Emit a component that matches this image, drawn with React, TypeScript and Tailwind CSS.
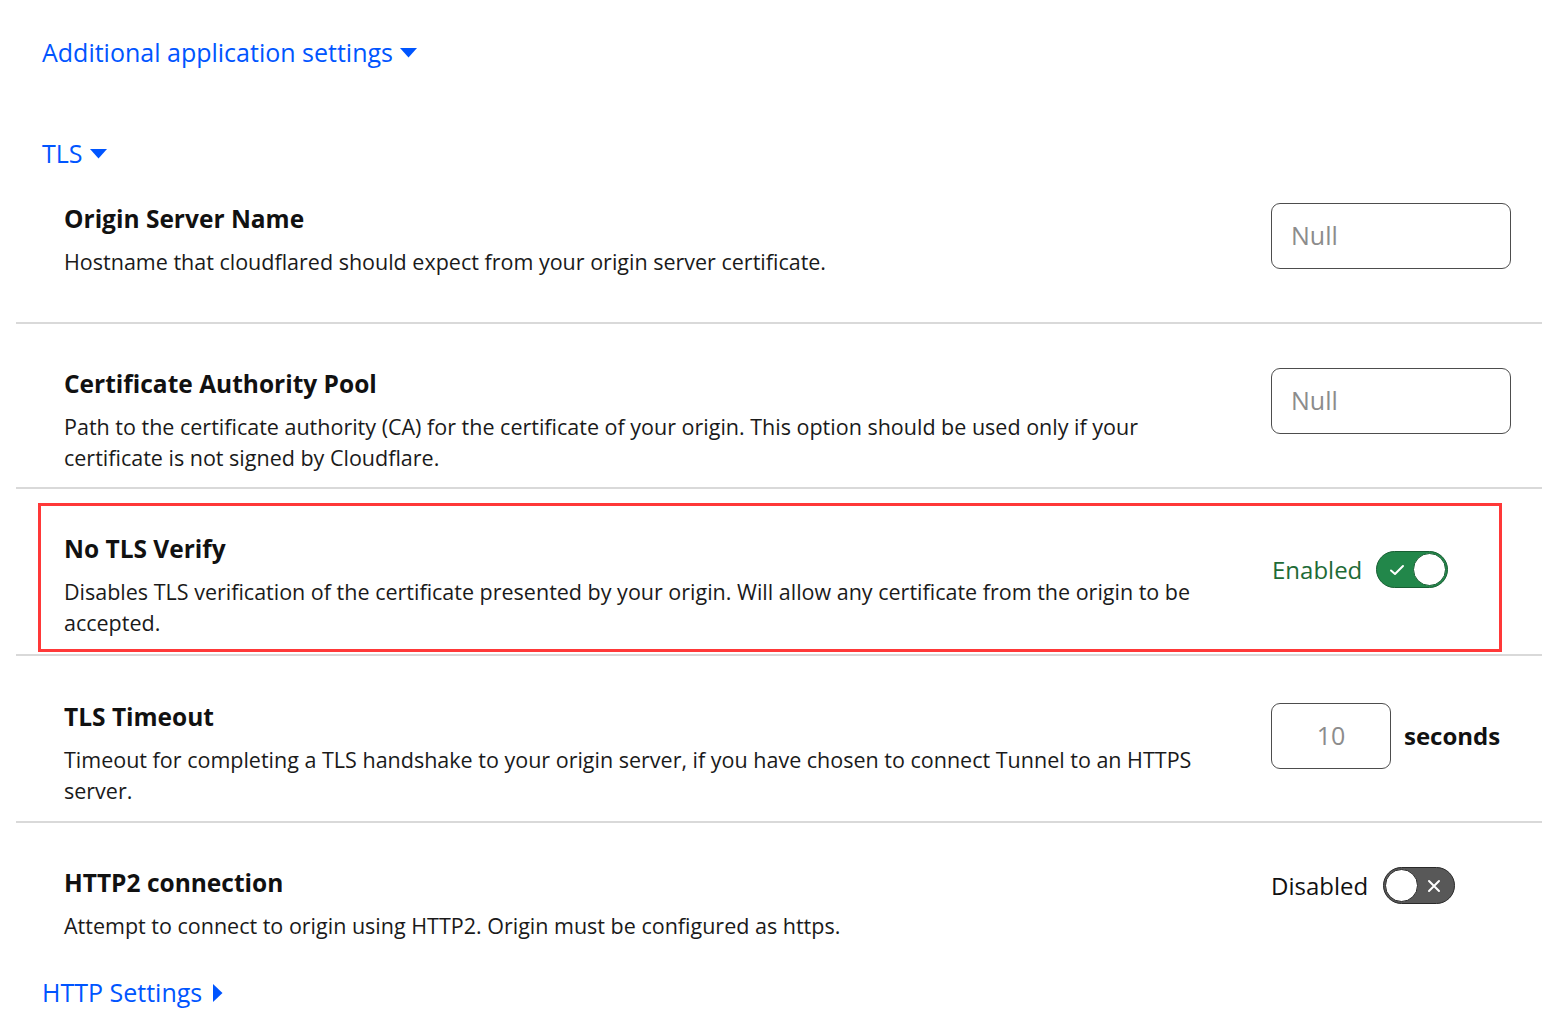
import React from "react";

const font = { fontFamily: '"Open Sans", "Noto Sans", sans-serif' };

const CaretDown = () => (
  <svg width="17" height="10" viewBox="0 0 17 10" className="ml-[7px] mt-[2px]">
    <path d="M0 0 H17 L8.5 9.5 Z" fill="#0055ff" />
  </svg>
);

const CaretRight = () => (
  <svg width="10" height="18" viewBox="0 0 10 18" className="ml-[11px] mt-[2px]">
    <path d="M0 0 L9.5 9 L0 18 Z" fill="#0055ff" />
  </svg>
);

const TextInput = ({ value, narrow }: { value: string; narrow?: boolean }) => (
  <div
    className={
      narrow
        ? "w-[120px] h-[66px] rounded-[9px] border border-[#4d4d4d] flex items-center justify-center text-[25px] text-[#8c8c8c]"
        : "w-[240px] h-[66px] rounded-[9px] border border-[#4d4d4d] flex items-center pl-[19px] text-[25px] text-[#8c8c8c]"
    }
  >
    {value}
  </div>
);

const Toggle = ({ on }: { on: boolean }) =>
  on ? (
    <div className="w-[72px] h-[37px] rounded-full bg-[#22874a] border-[1.5px] border-[#185f33] flex items-center justify-between pl-[12px] pr-[1px]">
      <svg width="16" height="12" viewBox="0 0 16 12">
        <path d="M2 6.5 L6 10 L14 2" fill="none" stroke="#fff" strokeWidth="2" strokeLinecap="round" strokeLinejoin="round" />
      </svg>
      <div className="w-[33px] h-[33px] rounded-full bg-white border-[1.5px] border-[#185f33]" />
    </div>
  ) : (
    <div className="w-[72px] h-[37px] rounded-full bg-[#585858] border-[1.5px] border-[#2a2a2a] flex items-center justify-between pl-[1px] pr-[13px]">
      <div className="w-[33px] h-[33px] rounded-full bg-white border-[1.5px] border-[#2a2a2a]" />
      <svg width="14" height="14" viewBox="0 0 14 14">
        <path d="M2 2 L12 12 M12 2 L2 12" fill="none" stroke="#fff" strokeWidth="2" strokeLinecap="round" />
      </svg>
    </div>
  );

interface RowProps {
  title: string;
  desc: string;
  control: React.ReactNode;
  pad: string;
  last?: boolean;
  highlight?: boolean;
}

const Row = ({ title, desc, control, pad, last, highlight }: RowProps) => (
  <div
    className={`relative ml-[16px] pl-[48px] pr-[31px] flex ${pad} ${
      last ? "" : "border-b-2 border-[#d9d9d9]"
    }`}
  >
    {highlight && (
      <div className="absolute left-[22px] top-[14px] w-[1464px] h-[149px] border-[3px] border-[#ff3838] pointer-events-none" />
    )}
    <div className="w-[1160px]">
      <div className="text-[24.5px] leading-[32px] font-bold text-[#111]">{title}</div>
      <div className="mt-[11px] min-h-[62px] text-[21.5px] leading-[31px] text-[#1a1a1a]">{desc}</div>
    </div>
    <div className="ml-auto w-[240px]">{control}</div>
  </div>
);

export default function App() {
  return (
    <div className="min-h-screen bg-white pt-[32px]" style={font}>
      <div className="ml-[42px] flex items-center text-[25px] leading-[40px] text-[#0055ff]">
        Additional application settings
        <CaretDown />
      </div>

      <div className="mt-[61px] ml-[42px] flex items-center text-[25px] leading-[40px] text-[#0055ff]">
        TLS
        <CaretDown />
      </div>

      <Row
        pad="pt-[30px] pb-[14px]"
        title="Origin Server Name"
        desc="Hostname that cloudflared should expect from your origin server certificate."
        control={<TextInput value="Null" />}
      />
      <Row
        pad="pt-[44px] pb-[14px]"
        title="Certificate Authority Pool"
        desc="Path to the certificate authority (CA) for the certificate of your origin. This option should be used only if your certificate is not signed by Cloudflare."
        control={<TextInput value="Null" />}
      />
      <Row
        highlight
        pad="pt-[44px] pb-[16px]"
        title="No TLS Verify"
        desc="Disables TLS verification of the certificate presented by your origin. Will allow any certificate from the origin to be accepted."
        control={
          <div className="mt-[18px] flex items-center">
            <span className="ml-[1px] text-[24px] leading-[32px] text-[#1e6b36]">Enabled</span>
            <div className="ml-[14px]">
              <Toggle on />
            </div>
          </div>
        }
      />
      <Row
        pad="pt-[45px] pb-[15px]"
        title="TLS Timeout"
        desc="Timeout for completing a TLS handshake to your origin server, if you have chosen to connect Tunnel to an HTTPS server."
        control={
          <div className="mt-[2px] flex items-center">
            <TextInput value="10" narrow />
            <span className="ml-[13px] text-[24px] font-bold text-[#111]">seconds</span>
          </div>
        }
      />
      <Row
        last
        pad="pt-[44px]"
        title="HTTP2 connection"
        desc="Attempt to connect to origin using HTTP2. Origin must be configured as https."
        control={
          <div className="flex items-center">
            <span className="text-[24px] leading-[32px] text-[#111]">Disabled</span>
            <div className="ml-[15px]">
              <Toggle on={false} />
            </div>
          </div>
        }
      />

      <div className="ml-[42px] flex items-center text-[25px] leading-[40px] text-[#0055ff]">
        HTTP Settings
        <CaretRight />
      </div>
    </div>
  );
}
